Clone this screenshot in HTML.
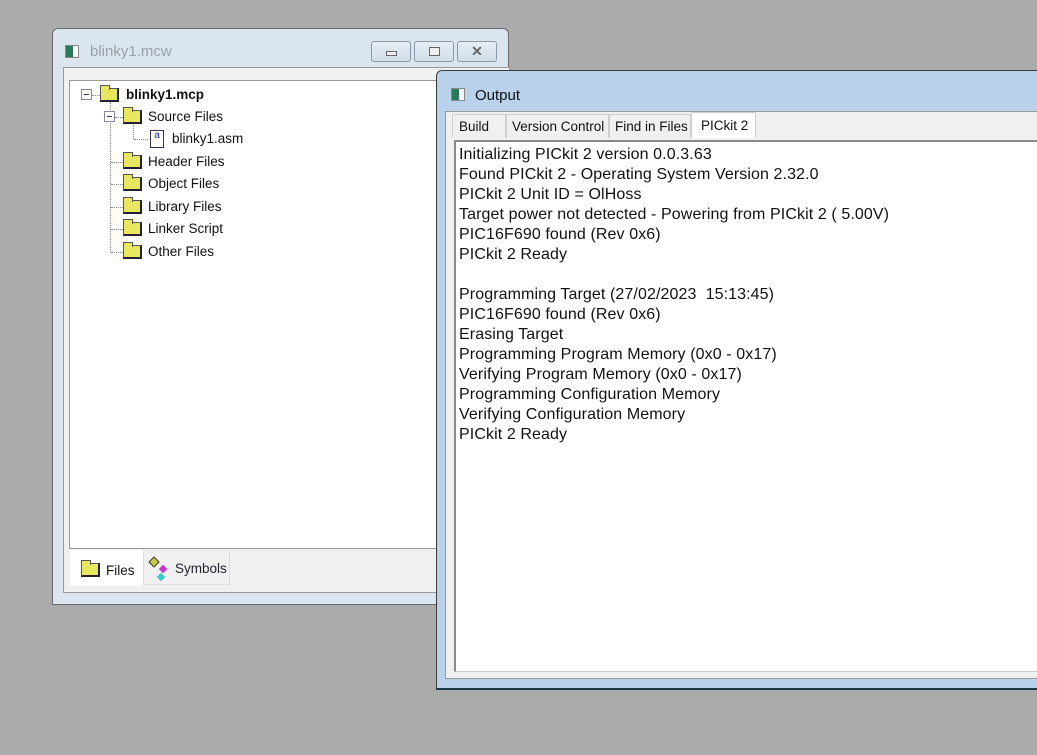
<!DOCTYPE html>
<html><head><meta charset="utf-8"><style>
*{margin:0;padding:0;box-sizing:border-box}
body{width:1037px;height:755px;background:#ababab;position:relative;overflow:hidden;font-family:"Liberation Sans",sans-serif}
.abs{position:absolute}
.win1{left:52px;top:28px;width:457px;height:577px;background:#dbe5f0;border:1px solid #6b6b6b;border-radius:6px 6px 0 0}
.win2{left:436px;top:70px;width:620px;height:620px;background:#b9d1ea;border:1px solid #3a3a3a;border-radius:6px 6px 0 0;border-bottom:2px solid #1a3a4a}
.ico{width:14px;height:13px;border:1px solid #888;background:linear-gradient(90deg,#2a7a5a 0 60%,#fff 60%)}
.btn{top:12px;height:21px;border:1px solid #8a9aaa;border-radius:3px;background:linear-gradient(#e6edf5,#d3dde9)}
.folder{position:absolute;width:19px;height:14px;background:#e8e860;border:1px solid #555;border-right:2px solid #223;border-bottom:2px solid #223}
.folder:before{content:"";position:absolute;left:-1px;top:-4px;width:8px;height:4px;background:#e8e860;border:1px solid #555;border-bottom:none}
.lbl{position:absolute;font-size:13.5px;color:#111;white-space:nowrap;line-height:16px}
.mb{position:absolute;width:11px;height:11px;border:1px solid #889;background:#fff}
.mb:after{content:"";position:absolute;left:2px;top:4px;width:5px;height:1px;background:#336}
.dv{position:absolute;border-left:1px dotted #888}
.dh{position:absolute;border-top:1px dotted #888}
.out{font-size:16px;line-height:20px;color:#111;letter-spacing:0.1px}
.tab{position:absolute;top:0;height:24px;font-size:13.5px;line-height:24px;padding:0 6px;background:#f0f0f0;border:1px solid #d0d0d0;border-bottom:none;color:#111;white-space:nowrap}
</style></head><body>
<div class="abs win1">
 <div class="abs ico" style="left:12px;top:16px"></div>
 <div class="abs" style="left:37px;top:14px;font-size:15px;color:#9aa0a8">blinky1.mcw</div>
 <div class="abs btn" style="left:318px;width:40px"><div class="abs" style="left:14px;top:9px;width:11px;height:5px;border:1px solid #666;background:#eee"></div></div>
 <div class="abs btn" style="left:361px;width:40px"><div class="abs" style="left:14px;top:5px;width:11px;height:9px;border:1px solid #666;background:#eee"></div></div>
 <div class="abs btn" style="left:404px;width:40px;text-align:center;font-size:14px;color:#666;font-weight:bold;line-height:18px">✕</div>
 <div class="abs" style="left:10px;top:38px;width:447px;height:526px;background:#f0f0f0;border:1px solid #999"></div>
 <div class="abs" style="left:16px;top:51px;width:380px;height:469px;background:#fff;border:1px solid #999"></div>
</div>
<div class="dv" style="left:110px;top:102px;height:150px"></div>
<div class="dv" style="left:133px;top:125px;height:14px"></div>
<div class="dh" style="left:92px;top:95px;width:8px"></div>
<div class="dh" style="left:115px;top:117px;width:8px"></div>
<div class="dh" style="left:134px;top:139px;width:14px"></div>
<div class="dh" style="left:111px;top:162px;width:12px"></div>
<div class="dh" style="left:111px;top:184px;width:12px"></div>
<div class="dh" style="left:111px;top:207px;width:12px"></div>
<div class="dh" style="left:111px;top:229px;width:12px"></div>
<div class="dh" style="left:111px;top:252px;width:12px"></div>
<div class="mb" style="left:81px;top:89px"></div>
<div class="folder" style="left:100px;top:88px"></div>
<div class="lbl" style="left:126px;top:87px;font-weight:bold">blinky1.mcp</div>
<div class="mb" style="left:104px;top:111px"></div>
<div class="folder" style="left:123px;top:110px"></div>
<div class="lbl" style="left:148px;top:109px">Source Files</div>
<div class="abs" style="left:150px;top:130px;width:14px;height:18px;border:1px solid #335;background:#fff;color:#22c;font-size:10px;line-height:10px;text-align:center">a</div>
<div class="lbl" style="left:172px;top:131px">blinky1.asm</div>
<div class="folder" style="left:123px;top:155px"></div><div class="lbl" style="left:148px;top:154px">Header Files</div>
<div class="folder" style="left:123px;top:177px"></div><div class="lbl" style="left:148px;top:176px">Object Files</div>
<div class="folder" style="left:123px;top:200px"></div><div class="lbl" style="left:148px;top:199px">Library Files</div>
<div class="folder" style="left:123px;top:222px"></div><div class="lbl" style="left:148px;top:221px">Linker Script</div>
<div class="folder" style="left:123px;top:245px"></div><div class="lbl" style="left:148px;top:244px">Other Files</div>
<div class="abs" style="left:70px;top:550px;width:73px;height:36px;background:#fff"></div>
<div class="folder" style="left:81px;top:563px"></div>
<div class="lbl" style="left:106px;top:563px">Files</div>
<div class="abs" style="left:143px;top:552px;width:87px;height:33px;border:1px solid #ddd;border-top:none"></div>
<div class="abs" style="left:150px;top:558px;width:8px;height:8px;background:#cc4;border:1px solid #333;transform:rotate(45deg)"></div>
<div class="abs" style="left:160px;top:566px;width:6px;height:6px;background:#c3c;transform:rotate(45deg)"></div>
<div class="abs" style="left:158px;top:574px;width:6px;height:6px;background:#3cc;transform:rotate(45deg)"></div>
<div class="lbl" style="left:175px;top:561px;color:#223">Symbols</div>

<div class="abs win2">
 <div class="abs ico" style="left:14px;top:17px"></div>
 <div class="abs" style="left:38px;top:16px;font-size:15px;color:#111">Output</div>
 <div class="abs" style="left:8px;top:40px;width:620px;height:568px;background:#f0f0f0;border:1px solid #999"></div>
 <div class="abs" style="left:15px;top:43px;width:620px;height:24px">
  <div class="tab" style="left:0;width:54px">Build</div>
  <div class="tab" style="left:54px;width:103px;padding:0 5px">Version Control</div>
  <div class="tab" style="left:157px;width:82px;padding:0 5px">Find in Files</div>
  <div class="tab" style="left:239px;width:65px;background:#fff;top:-2px;height:26px;padding:2px 0 0 9px;line-height:22px">PICkit 2</div>
 </div>
 <div class="abs out" style="left:17px;top:69px;width:620px;height:532px;background:#fff;border:2px solid #888;border-right:none;border-bottom:1px solid #ccc;padding:3px 0 0 3px">
Initializing PICkit 2 version 0.0.3.63<br>Found PICkit 2 - Operating System Version 2.32.0<br>PICkit 2 Unit ID = OlHoss<br>Target power not detected - Powering from PICkit 2 ( 5.00V)<br>PIC16F690 found (Rev 0x6)<br>PICkit 2 Ready<br><br>Programming Target (27/02/2023&nbsp; 15:13:45)<br>PIC16F690 found (Rev 0x6)<br>Erasing Target<br>Programming Program Memory (0x0 - 0x17)<br>Verifying Program Memory (0x0 - 0x17)<br>Programming Configuration Memory<br>Verifying Configuration Memory<br>PICkit 2 Ready
 </div>
</div>
</body></html>
